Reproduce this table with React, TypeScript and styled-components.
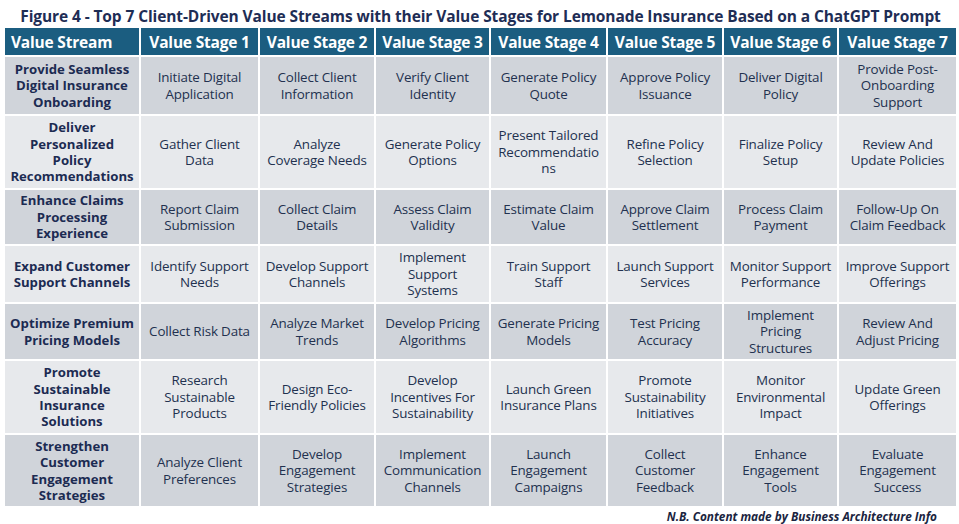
import React from 'react';
import styled, { createGlobalStyle } from 'styled-components';

const GlobalStyle = createGlobalStyle`
  html, body {
    margin: 0;
    padding: 0;
    background: #ffffff;
  }
  body {
    font-family: 'Open Sans', 'Noto Sans', sans-serif;
  }
`;

const Page = styled.div`
  width: 959px;
  height: 524px;
  box-sizing: border-box;
  padding: 5px 3px 0 5px;
  display: flex;
  flex-direction: column;
`;

const Title = styled.h1`
  margin: 0;
  height: 24px;
  line-height: 23px;
  text-align: center;
  font-size: 15.5px;
  font-weight: 700;
  letter-spacing: -0.1px;
  color: #1e2d55;
`;

const Grid = styled.div`
  display: grid;
  grid-template-columns: 134px 117px 114px 113px 115px 114px 113px 117px;
  grid-template-rows: 27px 57px 72px 54px 56px 55px 72px 71px;
  gap: 2px;
  background: #ffffff;
`;

const HeadCell = styled.div<{ $left?: boolean }>`
  background: #1b5d80;
  color: #ffffff;
  font-weight: 700;
  font-size: 15.5px;
  letter-spacing: -0.2px;
  display: flex;
  align-items: center;
  justify-content: ${(p) => (p.$left ? 'flex-start' : 'center')};
  padding: 0 6px;
  white-space: nowrap;
`;

const Cell = styled.div<{ $dark: boolean; $bold?: boolean }>`
  background: ${(p) => (p.$dark ? '#d0d4da' : '#e7e9ec')};
  color: ${(p) => (p.$bold ? '#1c2b52' : '#22314f')};
  font-weight: ${(p) => (p.$bold ? 700 : 400)};
  font-size: ${(p) => (p.$bold ? '13.2px' : '13.4px')};
  letter-spacing: ${(p) => (p.$bold ? '0' : '-0.15px')};
  line-height: 16.4px;
  display: flex;
  align-items: center;
  justify-content: center;
  text-align: center;
  padding: 0 5px;
  white-space: pre-line;
  word-break: break-word;
`;

const Footer = styled.div`
  margin-top: 2px;
  padding-right: 19px;
  text-align: right;
  font-size: 11.8px;
  font-weight: 700;
  font-style: italic;
  color: #1a2440;
`;

const headers = [
  'Value Stream',
  'Value Stage 1',
  'Value Stage 2',
  'Value Stage 3',
  'Value Stage 4',
  'Value Stage 5',
  'Value Stage 6',
  'Value Stage 7',
];

const rows: string[][] = [
  [
    'Provide Seamless Digital Insurance Onboarding',
    'Initiate Digital Application',
    'Collect Client Information',
    'Verify Client Identity',
    'Generate Policy Quote',
    'Approve Policy Issuance',
    'Deliver Digital Policy',
    'Provide Post-Onboarding Support',
  ],
  [
    'Deliver Personalized Policy Recommendations',
    'Gather Client Data',
    'Analyze Coverage Needs',
    'Generate Policy Options',
    'Present Tailored Recommendations',
    'Refine Policy Selection',
    'Finalize Policy Setup',
    'Review And Update Policies',
  ],
  [
    'Enhance Claims Processing Experience',
    'Report Claim Submission',
    'Collect Claim Details',
    'Assess Claim Validity',
    'Estimate Claim Value',
    'Approve Claim Settlement',
    'Process Claim Payment',
    'Follow-Up On Claim Feedback',
  ],
  [
    'Expand Customer Support Channels',
    'Identify Support Needs',
    'Develop Support Channels',
    'Implement\nSupport\nSystems',
    'Train Support Staff',
    'Launch Support Services',
    'Monitor Support Performance',
    'Improve Support Offerings',
  ],
  [
    'Optimize Premium Pricing Models',
    'Collect Risk Data',
    'Analyze Market Trends',
    'Develop Pricing Algorithms',
    'Generate Pricing Models',
    'Test Pricing Accuracy',
    'Implement Pricing Structures',
    'Review And Adjust Pricing',
  ],
  [
    'Promote Sustainable Insurance Solutions',
    'Research Sustainable Products',
    'Design Eco-Friendly Policies',
    'Develop Incentives For Sustainability',
    'Launch Green Insurance Plans',
    'Promote Sustainability Initiatives',
    'Monitor Environmental Impact',
    'Update Green Offerings',
  ],
  [
    'Strengthen Customer Engagement Strategies',
    'Analyze Client Preferences',
    'Develop Engagement Strategies',
    'Implement Communication Channels',
    'Launch Engagement Campaigns',
    'Collect Customer Feedback',
    'Enhance Engagement Tools',
    'Evaluate Engagement Success',
  ],
];

export default function App() {
  return (
    <>
      <GlobalStyle />
      <Page>
        <Title>
          Figure 4 - Top 7 Client-Driven Value Streams with their Value Stages for Lemonade
          Insurance Based on a ChatGPT Prompt
        </Title>
        <Grid>
          {headers.map((h, i) => (
            <HeadCell key={h} $left={i === 0}>
              {h}
            </HeadCell>
          ))}
          {rows.map((row, r) =>
            row.map((text, c) => (
              <Cell key={`${r}-${c}`} $dark={r % 2 === 0} $bold={c === 0}>
                {text}
              </Cell>
            ))
          )}
        </Grid>
        <Footer>N.B. Content made by Business Architecture Info</Footer>
      </Page>
    </>
  );
}
